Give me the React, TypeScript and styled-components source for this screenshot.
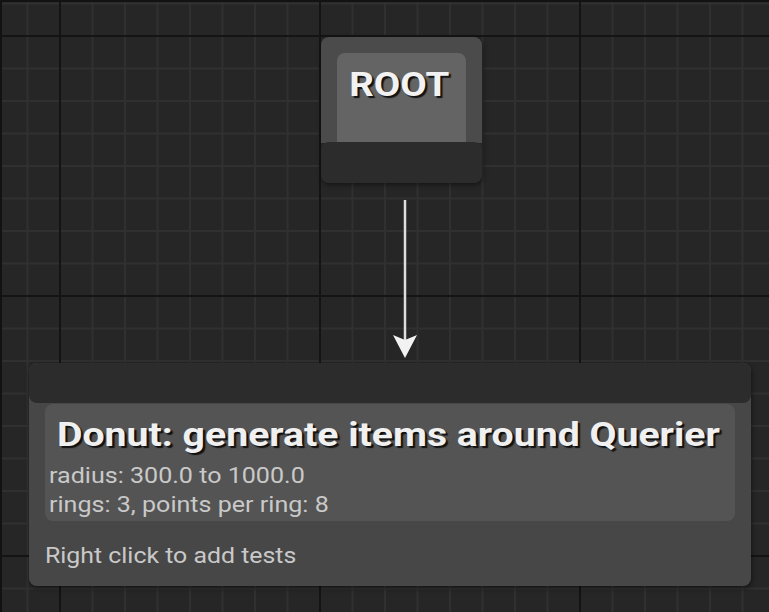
import React, {FC} from 'react'
import styled, {createGlobalStyle} from 'styled-components'

const GlobalStyle = createGlobalStyle`
  html, body {
    margin: 0;
    padding: 0;
    background: #262626;
  }
  body {
    font-family: Roboto, "Liberation Sans", sans-serif;
  }
`;

// graph canvas with the minor / major grid lines
const Canvas = styled.div`
  position: relative;
  width: 769px;
  height: 612px;
  overflow: hidden;
  background-color: #262626;
  background-image:
    linear-gradient(to right, #141414 2px, transparent 2px),
    linear-gradient(to bottom, #141414 2px, transparent 2px),
    linear-gradient(to right, #303030 2px, transparent 2px),
    linear-gradient(to bottom, #303030 2px, transparent 2px);
  background-size: 260px 100%, 100% 260px, 32.5px 100%, 100% 32.5px;
  background-position: 59px 0, 0 35px, 26.5px 0, 0 2.5px;
  box-shadow: inset 2px 2px 0 #121212;
`;

const Node = styled.div<{ $x: number; $y: number; $w: number }>`
  position: absolute;
  left: ${p => p.$x}px;
  top: ${p => p.$y}px;
  width: ${p => p.$w}px;
  display: flex;
  flex-direction: column;
  border-radius: 8px;
  box-shadow: 1px 2px 5px rgba(0, 0, 0, 0.45);
`;

// the engine draws its labels a bit wider than Roboto's natural advance
const Stretch = styled.span<{ $sx: number; $origin?: string }>`
  display: inline-block;
  transform: scaleX(${p => p.$sx});
  transform-origin: ${p => p.$origin || 'left'} center;
  white-space: nowrap;
`;

const RootBody = styled.div`
  background: #4b4b4b;
  border-radius: 8px 8px 0 0;
  padding: 16px 16px 0;
`;
const RootLabel = styled.div`
  height: 90px;
  box-sizing: border-box;
  padding: 11px 4px 0 0;
  background: #646464;
  border-radius: 8px 8px 0 0;
  text-align: center;
  font-size: 34px;
  line-height: 40px;
  font-weight: 700;
  color: #f2f2f2;
  text-shadow: 2px 2px 1px #111;
`;
const DarkBar = styled.div<{ $h: number }>`
  height: ${p => p.$h}px;
  background: #2c2c2c;
  border-radius: 8px;
`;

const DonutBody = styled.div`
  background: #474747;
  border-radius: 8px;
  display: flex;
  flex-direction: column;
`;
const Info = styled.div`
  margin: 1px 16px 0;
  padding: 10px 4px 2px;
  background: #545454;
  border-radius: 8px;
`;
const Title = styled.div`
  text-align: center;
  padding-right: 4px;
  font-size: 34px;
  line-height: 40px;
  font-weight: 700;
  color: #f0f0f0;
  text-shadow: 2px 2px 1px #111;
  margin-bottom: 7px;
  white-space: nowrap;
`;
const Detail = styled.div`
  font-size: 22px;
  line-height: 29px;
  color: #c9c9c9;
`;
const Hint = styled.div`
  padding: 20px 16px 16px;
  font-size: 22px;
  line-height: 29px;
  color: #c9c9c9;
`;

const Wire = styled.svg`
  position: absolute;
  left: 391px;
  top: 198px;
`;

const App: FC = () => {
    return (
        <Canvas>
            <GlobalStyle/>
            <Node $x={321} $y={37} $w={161}>
                <RootBody>
                    <RootLabel><Stretch $sx={1.13} $origin="center">ROOT</Stretch></RootLabel>
                </RootBody>
                <DarkBar $h={41} style={{marginTop: -1}}/>
            </Node>

            <Wire width="28" height="164" viewBox="0 0 28 164">
                <line x1="14" y1="2" x2="14" y2="142" stroke="#dedede" strokeWidth="2.5"/>
                <polygon points="2,137 14,142 26,137 14,160" fill="#f2f2f2"/>
            </Wire>

            <Node $x={29} $y={363} $w={722}>
                <DonutBody>
                    <DarkBar $h={40}/>
                    <Info>
                        <Title><Stretch $sx={1.153} $origin="center">Donut: generate items around Querier</Stretch></Title>
                        <Detail><Stretch $sx={1.14}>radius: 300.0 to 1000.0</Stretch></Detail>
                        <Detail><Stretch $sx={1.14}>rings: 3, points per ring: 8</Stretch></Detail>
                    </Info>
                    <Hint><Stretch $sx={1.13}>Right click to add tests</Stretch></Hint>
                </DonutBody>
            </Node>
        </Canvas>
    )
}

export default App
